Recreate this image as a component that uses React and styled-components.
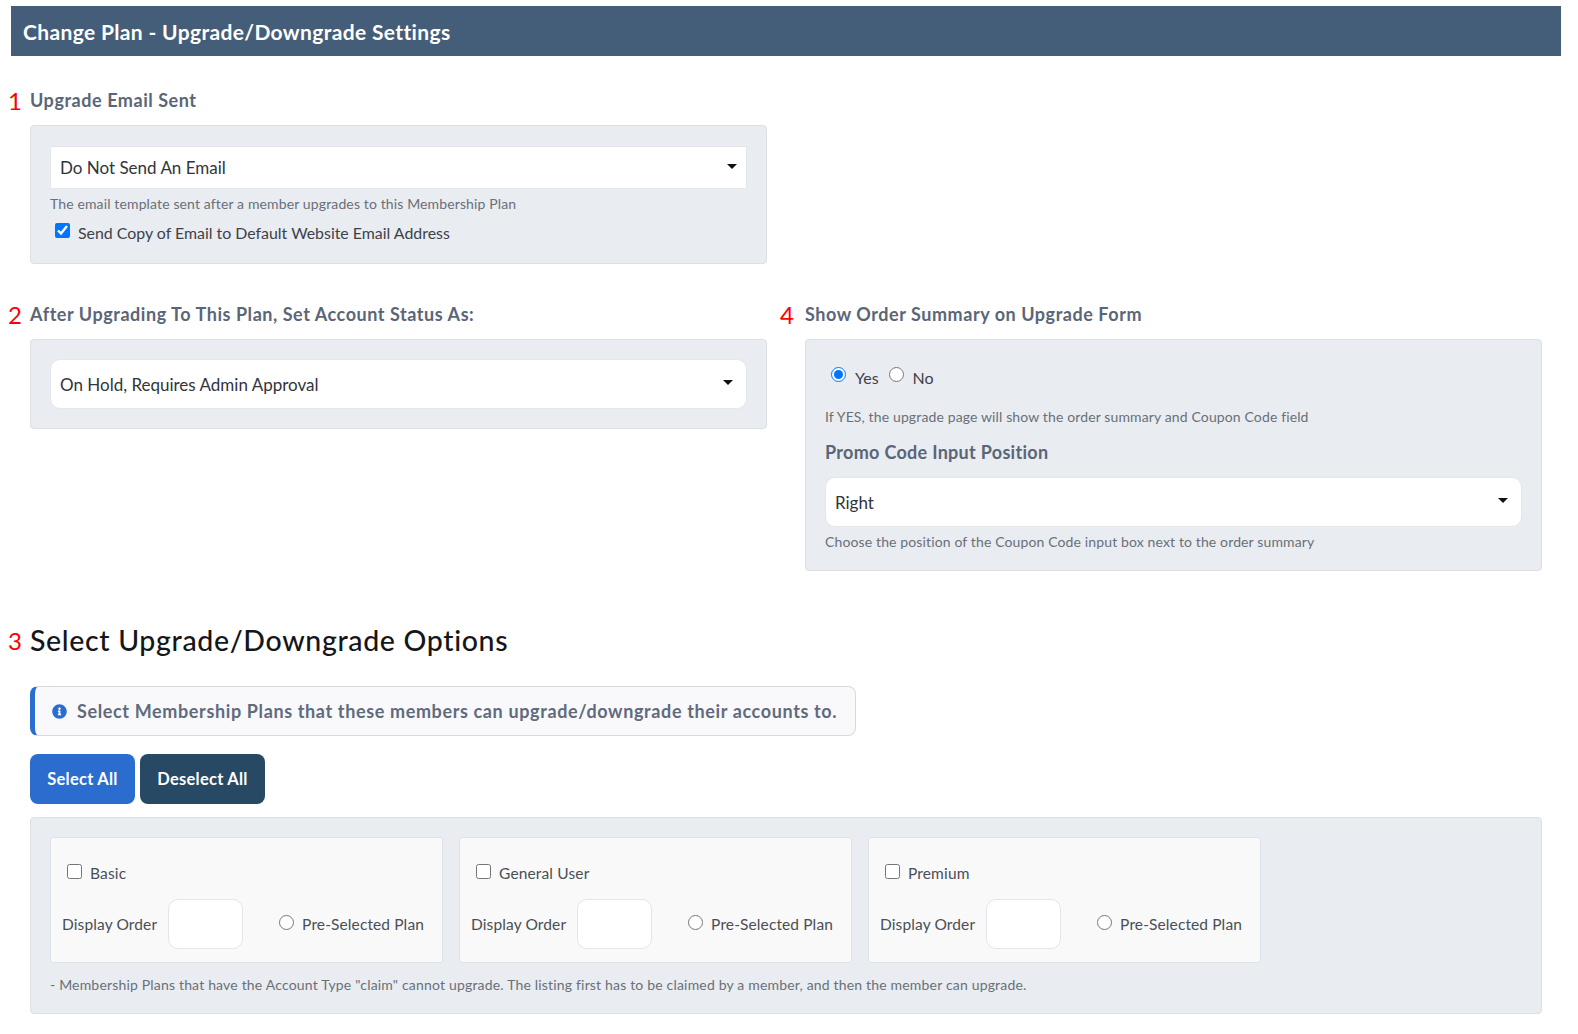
import styled, { createGlobalStyle } from "styled-components";
import { FaInfoCircle } from "react-icons/fa";

const GlobalStyle = createGlobalStyle`
  html, body {
    margin: 0;
    background: #fff;
    font-family: "Lato", "Open Sans", sans-serif;
    color: #3a3f47;
  }
`;

const Page = styled.div`
  padding: 6px 17px 20px 11px;
`;

const Banner = styled.div`
  background: #445d78;
  color: #fff;
  height: 50px;
  display: flex;
  align-items: center;
  padding-left: 12px;
  font-size: 21px;
  font-weight: 700;
  letter-spacing: 0.35px;
`;

const Body = styled.div`
  padding: 0 19px 0 19px;
`;

const SettingsGrid = styled.div`
  display: grid;
  grid-template-columns: 737px 737px;
  column-gap: 38px;
  align-items: start;
`;

const Cell = styled.div`
  margin-top: ${(p) => p.$top}px;
`;

const Heading = styled.div`
  display: flex;
  align-items: center;
  height: 24px;
  margin: 0 0 13px -22px;
  font-size: 18px;
  font-weight: 700;
  letter-spacing: 0.55px;
  color: #5a6678;
`;

const Marker = styled.span`
  flex: none;
  width: ${(p) => 22 - (p.$shift || 0)}px;
  margin-left: ${(p) => p.$shift || 0}px;
  color: #f00;
  font-size: 24px;
  font-weight: 400;
  letter-spacing: 0;
`;

const Panel = styled.div`
  background: #e9ecf1;
  border: 1px solid #dcdfe5;
  border-radius: 4px;
  padding: ${(p) => p.$padding || "19px 19px 19px"};
  box-sizing: border-box;
`;

const SelectWrap = styled.div`
  position: relative;

  &::after {
    content: "";
    position: absolute;
    right: ${(p) => (p.$square ? 10 : 14)}px;
    top: 50%;
    margin-top: -4px;
    border: 5px solid transparent;
    border-top-color: #111;
    border-bottom: 0;
    pointer-events: none;
  }
`;

const Select = styled.select`
  appearance: none;
  display: block;
  width: 100%;
  height: ${(p) => (p.$square ? 43 : 50)}px;
  padding: 0 9px;
  background: #fff;
  border: 1px solid #e3e6eb;
  border-radius: ${(p) => (p.$square ? 0 : 10)}px;
  font: 400 17px "Lato", sans-serif;
  color: #30353c;
`;

const Hint = styled.div`
  font-size: 14px;
  line-height: 18px;
  letter-spacing: 0.13px;
  color: #6a7078;
  margin-top: ${(p) => p.$top || 6}px;
`;

const CheckLine = styled.label`
  display: flex;
  align-items: center;
  font-size: 15.9px;
  color: #3d4249;
  padding-left: 5px;
  margin-top: 7px;
  height: 24px;
`;

const Check = styled.input.attrs({ type: "checkbox" })`
  flex: none;
  width: 15px;
  height: 15px;
  margin: -${(p) => p.$lift}px 8px 0 0;
  accent-color: #0075ff;
`;

const RadioRow = styled.div`
  display: flex;
  align-items: center;
  height: 24px;
  padding-left: 6px;
  margin-top: 6px;
  font-size: 16px;
  color: #3d4249;
`;

const Radio = styled.input.attrs({ type: "radio" })`
  flex: none;
  width: 15px;
  height: 15px;
  margin: -${(p) => p.$lift}px ${(p) => p.$gap || 8}px 0 0;
  accent-color: #0075ff;
`;

const RadioLabel = styled.span`
  margin-right: 10px;
`;

const SubHeading = styled.div`
  font-size: 18px;
  font-weight: 700;
  line-height: 24px;
  letter-spacing: 0.3px;
  color: #5a6678;
  margin: 14px 0 13px;
`;

const SectionTitle = styled.h2`
  display: flex;
  align-items: center;
  margin: 51px 0 28px -22px;
  height: 36px;
  font-size: 28.5px;
  font-weight: 500;
  letter-spacing: 0.65px;
  color: #14161a;
`;

const Alert = styled.div`
  display: flex;
  align-items: center;
  width: 826px;
  height: 50px;
  box-sizing: border-box;
  padding-left: 17px;
  gap: 10px;
  background: #f9f9fb;
  border: 1px solid #d6d9df;
  border-left: 5px solid #2a6dd0;
  border-radius: 8px;
  font-size: 18px;
  font-weight: 700;
  letter-spacing: 0.63px;
  color: #5f6b7c;

  svg {
    color: #2a6dd0;
    font-size: 15px;
  }
`;

const ButtonRow = styled.div`
  display: flex;
  gap: 5px;
  margin: 18px 0 13px;
`;

const Button = styled.button`
  height: 50px;
  padding: 0;
  width: ${(p) => p.$width}px;
  border: 0;
  border-radius: 8px;
  background: ${(p) => p.$bg};
  color: #fff;
  font: 700 16.5px "Lato", sans-serif;
  letter-spacing: 0.25px;
`;

const CardRow = styled.div`
  display: flex;
  gap: 16px;
`;

const Card = styled.div`
  width: 393px;
  height: 126px;
  box-sizing: border-box;
  background: #f9f9f9;
  border: 1px solid #dfe2e7;
  border-radius: 3px;
  padding: 23px 18px 0 11px;
`;

const CardCheck = styled.label`
  display: flex;
  align-items: center;
  padding-left: 5px;
  height: 24px;
  font-size: 15.5px;
  letter-spacing: 0.15px;
  color: #4a4f56;
`;

const OrderLine = styled.div`
  display: flex;
  align-items: center;
  margin-top: 14px;
  font-size: 15.5px;
  letter-spacing: 0.12px;
  color: #4a4f56;
`;

const OrderInput = styled.input`
  width: 75px;
  height: 50px;
  box-sizing: border-box;
  margin: 0 auto 0 11px;
  background: #fff;
  border: 1px solid #e3e6eb;
  border-radius: 10px;
`;

const Footnote = styled.div`
  font-size: 14px;
  line-height: 18px;
  letter-spacing: 0.18px;
  color: #6a7078;
  margin-top: 13px;
  padding-bottom: 19px;
`;

const plans = ["Basic", "General User", "Premium"];

export default function App() {
  return (
    <Page>
      <GlobalStyle />
      <Banner>Change Plan - Upgrade/Downgrade Settings</Banner>
      <Body>
        <SettingsGrid>
          <Cell $top={32}>
            <Heading>
              <Marker>1</Marker>Upgrade Email Sent
            </Heading>
            <Panel $padding="20px 19px 19px">
              <SelectWrap $square>
                <Select $square defaultValue="none">
                  <option value="none">Do Not Send An Email</option>
                </Select>
              </SelectWrap>
              <Hint>The email template sent after a member upgrades to this Membership Plan</Hint>
              <CheckLine>
                <Check $lift={4} defaultChecked />
                Send Copy of Email to Default Website Email Address
              </CheckLine>
            </Panel>
          </Cell>
          <div />
          <Cell $top={38}>
            <Heading>
              <Marker>2</Marker>After Upgrading To This Plan, Set Account Status As:
            </Heading>
            <Panel>
              <SelectWrap>
                <Select defaultValue="hold">
                  <option value="hold">On Hold, Requires Admin Approval</option>
                </Select>
              </SelectWrap>
            </Panel>
          </Cell>
          <Cell $top={38}>
            <Heading>
              <Marker $shift={-3}>4</Marker>Show Order Summary on Upgrade Form
            </Heading>
            <Panel>
              <RadioRow>
                <Radio $lift={6} $gap={9} name="summary" defaultChecked />
                <RadioLabel>Yes</RadioLabel>
                <Radio $lift={6} $gap={9} name="summary" />
                <RadioLabel>No</RadioLabel>
              </RadioRow>
              <Hint $top={19}>If YES, the upgrade page will show the order summary and Coupon Code field</Hint>
              <SubHeading>Promo Code Input Position</SubHeading>
              <SelectWrap>
                <Select defaultValue="right">
                  <option value="right">Right</option>
                </Select>
              </SelectWrap>
              <Hint>Choose the position of the Coupon Code input box next to the order summary</Hint>
            </Panel>
          </Cell>
        </SettingsGrid>

        <SectionTitle>
          <Marker>3</Marker>Select Upgrade/Downgrade Options
        </SectionTitle>
        <Alert>
          <FaInfoCircle />
          Select Membership Plans that these members can upgrade/downgrade their accounts to.
        </Alert>
        <ButtonRow>
          <Button $width={105} $bg="#2a6dcf">Select All</Button>
          <Button $width={125} $bg="#284963">Deselect All</Button>
        </ButtonRow>
        <Panel $padding="19px 19px 0">
          <CardRow>
            {plans.map((plan) => (
              <Card key={plan}>
                <CardCheck>
                  <Check $lift={4} />
                  {plan}
                </CardCheck>
                <OrderLine>
                  Display Order
                  <OrderInput />
                  <Radio $lift={4} />
                  Pre-Selected Plan
                </OrderLine>
              </Card>
            ))}
          </CardRow>
          <Footnote>
            - Membership Plans that have the Account Type "claim" cannot upgrade. The listing first has to be claimed by a member, and then the member can upgrade.
          </Footnote>
        </Panel>
      </Body>
    </Page>
  );
}
